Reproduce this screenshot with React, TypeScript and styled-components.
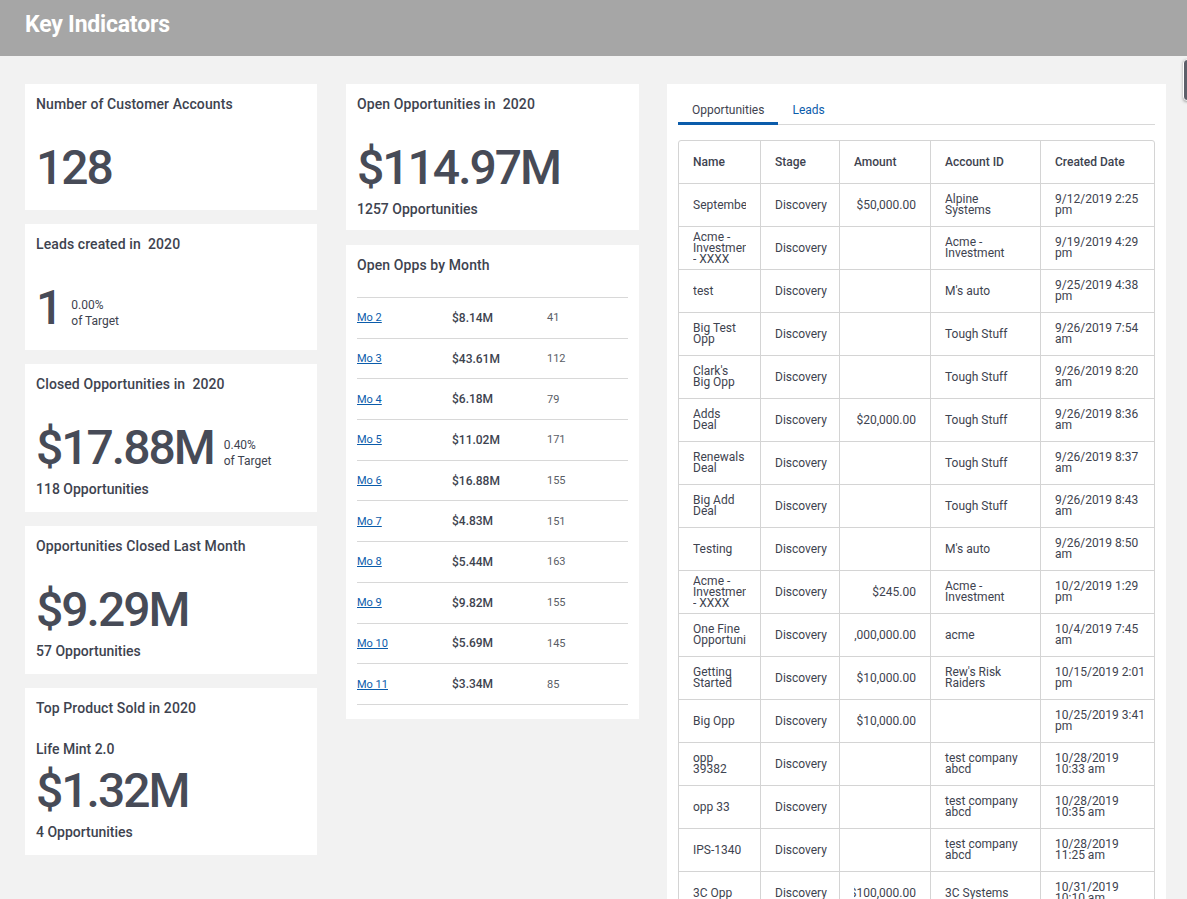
import React, { useState } from 'react';
import styled, { createGlobalStyle } from 'styled-components';

type Opp = {
  name: string;
  stage: string;
  amount: string;
  account: string;
  created: string;
};

const months = [
  { label: 'Mo 2', amount: '$8.14M', count: 41 },
  { label: 'Mo 3', amount: '$43.61M', count: 112 },
  { label: 'Mo 4', amount: '$6.18M', count: 79 },
  { label: 'Mo 5', amount: '$11.02M', count: 171 },
  { label: 'Mo 6', amount: '$16.88M', count: 155 },
  { label: 'Mo 7', amount: '$4.83M', count: 151 },
  { label: 'Mo 8', amount: '$5.44M', count: 163 },
  { label: 'Mo 9', amount: '$9.82M', count: 155 },
  { label: 'Mo 10', amount: '$5.69M', count: 145 },
  { label: 'Mo 11', amount: '$3.34M', count: 85 },
];

const opps: Opp[] = [
  { name: 'September', stage: 'Discovery', amount: '$50,000.00', account: 'Alpine Systems', created: '9/12/2019 2:25 pm' },
  { name: 'Acme - Investment - XXXX', stage: 'Discovery', amount: '', account: 'Acme - Investment', created: '9/19/2019 4:29 pm' },
  { name: 'test', stage: 'Discovery', amount: '', account: "M's auto", created: '9/25/2019 4:38 pm' },
  { name: 'Big Test Opp', stage: 'Discovery', amount: '', account: 'Tough Stuff', created: '9/26/2019 7:54 am' },
  { name: "Clark's Big Opp", stage: 'Discovery', amount: '', account: 'Tough Stuff', created: '9/26/2019 8:20 am' },
  { name: 'Adds Deal', stage: 'Discovery', amount: '$20,000.00', account: 'Tough Stuff', created: '9/26/2019 8:36 am' },
  { name: 'Renewals Deal', stage: 'Discovery', amount: '', account: 'Tough Stuff', created: '9/26/2019 8:37 am' },
  { name: 'Big Add Deal', stage: 'Discovery', amount: '', account: 'Tough Stuff', created: '9/26/2019 8:43 am' },
  { name: 'Testing', stage: 'Discovery', amount: '', account: "M's auto", created: '9/26/2019 8:50 am' },
  { name: 'Acme - Investment - XXXX', stage: 'Discovery', amount: '$245.00', account: 'Acme - Investment', created: '10/2/2019 1:29 pm' },
  { name: 'One Fine Opportunity', stage: 'Discovery', amount: '$1,000,000.00', account: 'acme', created: '10/4/2019 7:45 am' },
  { name: 'Getting Started', stage: 'Discovery', amount: '$10,000.00', account: "Rew's Risk Raiders", created: '10/15/2019 2:01 pm' },
  { name: 'Big Opp', stage: 'Discovery', amount: '$10,000.00', account: '', created: '10/25/2019 3:41 pm' },
  { name: 'opp 39382', stage: 'Discovery', amount: '', account: 'test company abcd', created: '10/28/2019 10:33 am' },
  { name: 'opp 33', stage: 'Discovery', amount: '', account: 'test company abcd', created: '10/28/2019 10:35 am' },
  { name: 'IPS-1340', stage: 'Discovery', amount: '', account: 'test company abcd', created: '10/28/2019 11:25 am' },
  { name: '3C Opp', stage: 'Discovery', amount: '$100,000.00', account: '3C Systems', created: '10/31/2019 10:10 am' },
  { name: 'Q4 Renewal', stage: 'Discovery', amount: '$25,000.00', account: 'Tough Stuff', created: '11/4/2019 9:12 am' },
];

const App: React.FC = () => {
  const [tab, setTab] = useState<'opps' | 'leads'>('opps');

  return (
    <>
      <GlobalStyle />
      <Header>
        <PageTitle>Key Indicators</PageTitle>
      </Header>
      <Content>
        <Column>
          <Card>
            <CardTitle>Number of Customer Accounts</CardTitle>
            <ValueRow>
              <BigValue>128</BigValue>
            </ValueRow>
          </Card>
          <Card>
            <CardTitle>Leads created in&nbsp; 2020</CardTitle>
            <ValueRow>
              <BigValue>1</BigValue>
              <Side>
                <span>0.00%</span>
                <span>of Target</span>
              </Side>
            </ValueRow>
          </Card>
          <Card>
            <CardTitle>Closed Opportunities in&nbsp; 2020</CardTitle>
            <ValueRow>
              <BigValue>$17.88M</BigValue>
              <Side>
                <span>0.40%</span>
                <span>of Target</span>
              </Side>
            </ValueRow>
            <SubLine>118 Opportunities</SubLine>
          </Card>
          <Card>
            <CardTitle>Opportunities Closed Last Month</CardTitle>
            <ValueRow>
              <BigValue>$9.29M</BigValue>
            </ValueRow>
            <SubLine>57 Opportunities</SubLine>
          </Card>
          <Card>
            <CardTitle>Top Product Sold in 2020</CardTitle>
            <ProductName>Life Mint 2.0</ProductName>
            <ValueRow $tight>
              <BigValue>$1.32M</BigValue>
            </ValueRow>
            <SubLine>4 Opportunities</SubLine>
          </Card>
        </Column>

        <Column $gap={15}>
          <Card>
            <CardTitle>Open Opportunities in&nbsp; 2020</CardTitle>
            <ValueRow>
              <BigValue>$114.97M</BigValue>
            </ValueRow>
            <SubLine $last>1257 Opportunities</SubLine>
          </Card>
          <Card>
            <CardTitle>Open Opps by Month</CardTitle>
            <MonthList>
              {months.map((m) => (
                <MonthRow key={m.label}>
                  <MonthLink href="#">{m.label}</MonthLink>
                  <MonthAmount>{m.amount}</MonthAmount>
                  <MonthCount>{m.count}</MonthCount>
                </MonthRow>
              ))}
            </MonthList>
          </Card>
        </Column>

        <Panel>
          <Tabs>
            <Tab $active={tab === 'opps'} onClick={() => setTab('opps')}>Opportunities</Tab>
            <Tab $active={tab === 'leads'} onClick={() => setTab('leads')}>Leads</Tab>
          </Tabs>
          <Table>
            <TableRow $head>
              <Cell>Name</Cell>
              <Cell>Stage</Cell>
              <Cell>Amount</Cell>
              <Cell>Account ID</Cell>
              <Cell $last>Created Date</Cell>
            </TableRow>
            {opps.map((o, i) => (
              <TableRow key={i}>
                <Cell>
                  <ClippedText>{o.name}</ClippedText>
                </Cell>
                <Cell>{o.stage}</Cell>
                <Cell>
                  <Amount>
                    <span>{o.amount}</span>
                  </Amount>
                </Cell>
                <Cell>{o.account}</Cell>
                <Cell $last>{o.created}</Cell>
              </TableRow>
            ))}
          </Table>
        </Panel>
      </Content>
      <ScrollThumb />
    </>
  );
};

export default App;

// Styled Components

const GlobalStyle = createGlobalStyle`
  html, body {
    margin: 0;
    padding: 0;
    overflow: hidden;
    background: #f2f2f2;
    font-family: Roboto, "Liberation Sans", Arial, sans-serif;
    color: #3e434f;
  }
  * {
    box-sizing: border-box;
  }
`;

const Header = styled.header`
  height: 56px;
  background: #a6a6a6;
  padding: 11px 25px 0;
`;

const PageTitle = styled.h1`
  margin: 0;
  font-size: 23px;
  line-height: 28px;
  font-weight: 700;
  color: #fff;
  letter-spacing: -0.2px;
`;

const Content = styled.main`
  display: grid;
  grid-template-columns: 292px 293px 498px;
  column-gap: 29px;
  align-items: start;
  padding: 28px 0 0 25px;
`;

const Column = styled.div<{ $gap?: number }>`
  display: flex;
  flex-direction: column;
  gap: ${(p) => p.$gap || 14}px;
`;

const Card = styled.section`
  background: #fff;
  padding: 12px 11px 14px;
`;

const CardTitle = styled.h2`
  margin: 0;
  font-size: 14px;
  line-height: 16px;
  font-weight: 500;
  color: #3e434f;
  letter-spacing: 0.1px;
`;

const ValueRow = styled.div<{ $tight?: boolean }>`
  display: flex;
  align-items: flex-end;
  gap: 10px;
  margin-top: ${(p) => (p.$tight ? '5px' : '28px')};
`;

const BigValue = styled.div`
  font-size: 48px;
  line-height: 56px;
  font-weight: 500;
  letter-spacing: -2px;
  color: #474b57;
`;

const Side = styled.div`
  display: flex;
  flex-direction: column;
  margin-bottom: 7px;
  font-size: 12px;
  line-height: 16px;
  color: #3e434f;
`;

const SubLine = styled.div<{ $last?: boolean }>`
  margin-top: 4px;
  margin-bottom: ${(p) => (p.$last ? '-2px' : '0')};
  font-size: 14px;
  line-height: 18px;
  font-weight: 500;
  color: #3e434f;
`;

const ProductName = styled.div`
  margin-top: 24px;
  font-size: 14px;
  line-height: 18px;
  font-weight: 500;
  color: #3e434f;
`;

const MonthList = styled.div`
  margin-top: 24px;
  border-top: 1px solid #d8d8d8;
`;

const MonthRow = styled.div`
  display: grid;
  grid-template-columns: 95px 95px 1fr;
  align-items: center;
  height: 40.7px;
  border-bottom: 1px solid #d8d8d8;
`;

const MonthLink = styled.a`
  font-size: 11px;
  color: #0b5cab;
  text-decoration: underline;
`;

const MonthAmount = styled.span`
  font-size: 12px;
  font-weight: 500;
  color: #3e434f;
`;

const MonthCount = styled.span`
  font-size: 11px;
  color: #5a5e66;
`;

const Panel = styled.section`
  background: #fff;
  padding: 12px 11px 0;
  min-height: 900px;
  margin-left: -1px;
`;

const Tabs = styled.div`
  display: flex;
  border-bottom: 1px solid #d8d8d8;
`;

const Tab = styled.button<{ $active?: boolean }>`
  border: none;
  background: none;
  margin: 0 0 -1px;
  padding: 4px 14px 2px;
  font-family: inherit;
  font-size: 12px;
  line-height: 20px;
  cursor: pointer;
  color: ${(p) => (p.$active ? '#3e434f' : '#0b5cab')};
  border-bottom: 3px solid ${(p) => (p.$active ? '#0b5cab' : 'transparent')};
`;

const Table = styled.div`
  margin-top: 15px;
  border: 1px solid #d4d4d4;
  border-radius: 3px;
`;

const TableRow = styled.div<{ $head?: boolean }>`
  display: grid;
  grid-template-columns: 82px 79px 91px 110px 112px;
  height: 43px;
  border-bottom: 1px solid #d4d4d4;
  font-size: 12px;
  line-height: 11px;
  font-weight: ${(p) => (p.$head ? 500 : 400)};
  color: #3e434f;
`;

const Cell = styled.div<{ $last?: boolean }>`
  display: flex;
  align-items: center;
  min-width: 0;
  padding: ${(p) => (p.$last ? '0 4px 0 14px' : '0 14px')};
  border-right: ${(p) => (p.$last ? 'none' : '1px solid #d4d4d4')};
`;

const ClippedText = styled.div`
  width: 100%;
  overflow-x: clip;
  overflow-y: visible;
`;

const Amount = styled.div`
  display: flex;
  justify-content: flex-end;
  width: 100%;
  overflow-x: clip;
  overflow-y: visible;
  white-space: nowrap;

  span {
    flex-shrink: 0;
  }
`;

const ScrollThumb = styled.div`
  position: fixed;
  top: 59px;
  right: -7px;
  width: 11px;
  height: 42px;
  border-radius: 4px;
  background: #5d606a;
  border: 1px solid #fff;
  box-shadow: 0 1px 3px rgba(0, 0, 0, 0.35);
`;
